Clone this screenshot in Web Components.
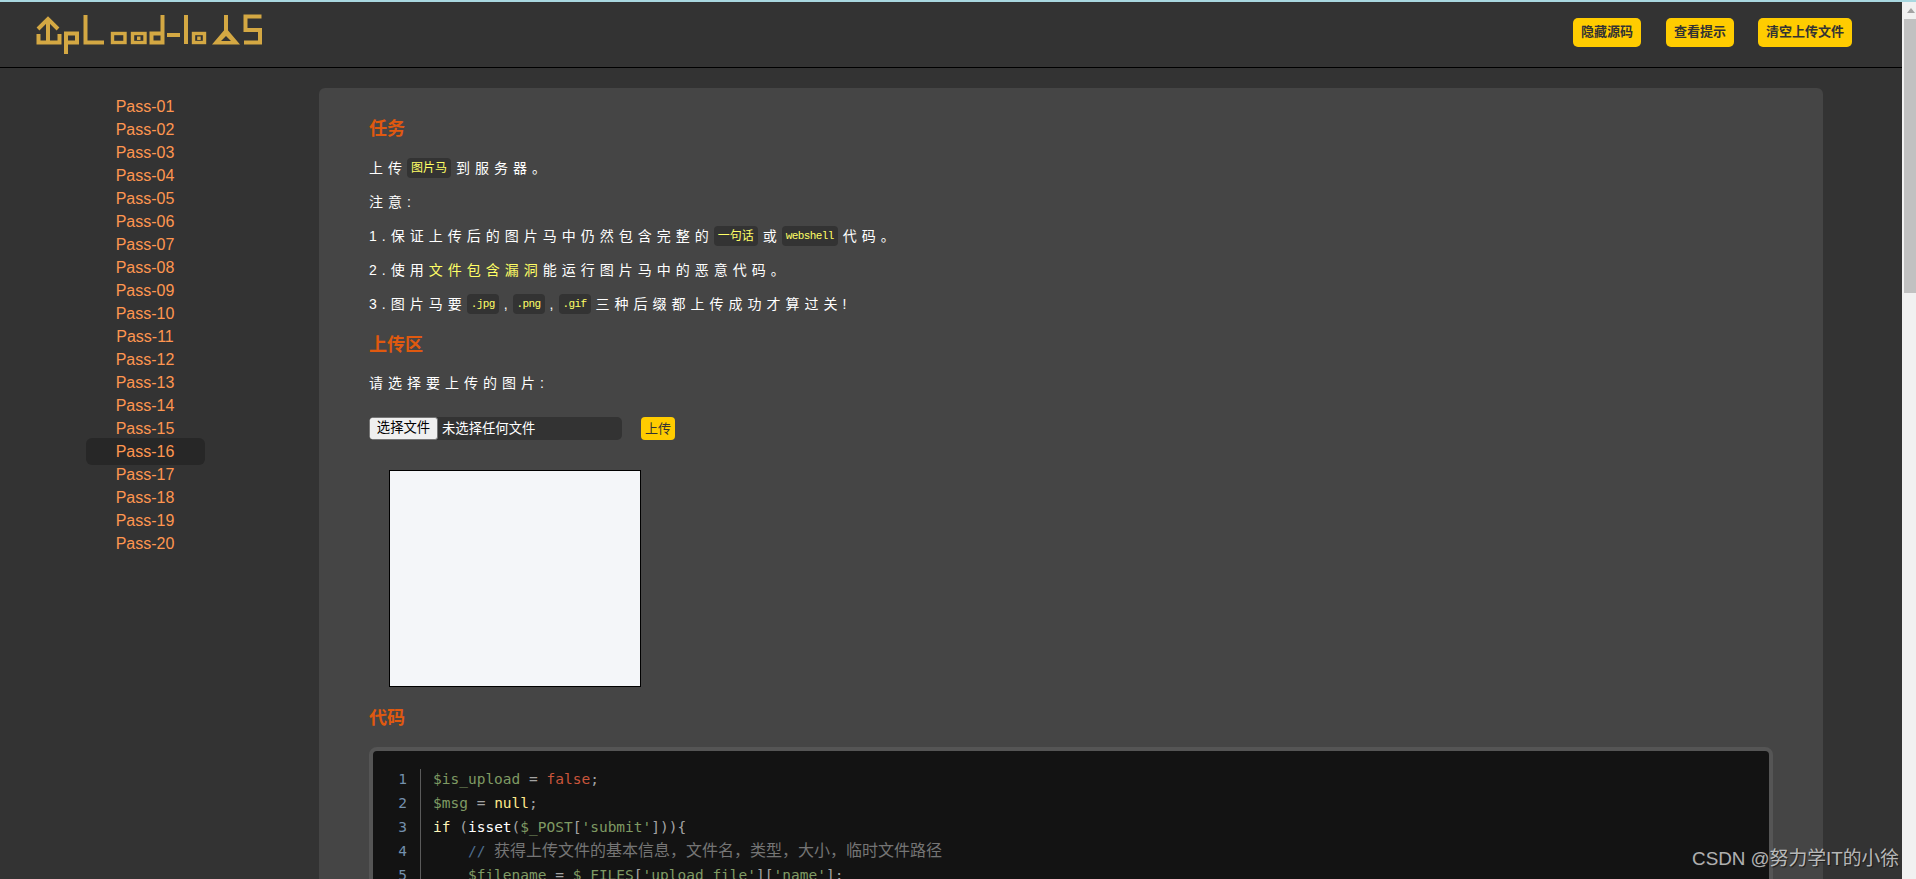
<!DOCTYPE html>
<html lang="zh-CN">
<head>
<meta charset="utf-8">
<title>upload-labs</title>
<style>
    html, body { margin: 0; height: 100%; overflow: hidden; background: #333; }
    body { font-family: "Liberation Sans", "Noto Sans CJK SC", sans-serif; }
</style>
</head>
<body>
<lab-page>
    <lab-header slot="header">
        <lab-button style="margin-right:1px">隐藏源码</lab-button>
        <lab-button>查看提示</lab-button>
        <lab-button>清空上传文件</lab-button>
    </lab-header>
    <lab-sidebar slot="sidebar">
        <lab-pass>Pass-01</lab-pass>
        <lab-pass>Pass-02</lab-pass>
        <lab-pass>Pass-03</lab-pass>
        <lab-pass>Pass-04</lab-pass>
        <lab-pass>Pass-05</lab-pass>
        <lab-pass>Pass-06</lab-pass>
        <lab-pass>Pass-07</lab-pass>
        <lab-pass>Pass-08</lab-pass>
        <lab-pass>Pass-09</lab-pass>
        <lab-pass>Pass-10</lab-pass>
        <lab-pass>Pass-11</lab-pass>
        <lab-pass>Pass-12</lab-pass>
        <lab-pass>Pass-13</lab-pass>
        <lab-pass>Pass-14</lab-pass>
        <lab-pass>Pass-15</lab-pass>
        <lab-pass active>Pass-16</lab-pass>
        <lab-pass>Pass-17</lab-pass>
        <lab-pass>Pass-18</lab-pass>
        <lab-pass>Pass-19</lab-pass>
        <lab-pass>Pass-20</lab-pass>
    </lab-sidebar>
    <lab-panel slot="main">
        <lab-heading style="margin-bottom:16px">任务</lab-heading>
        <lab-para>上传<lab-tag>图片马</lab-tag>到服务器。</lab-para>
        <lab-para>注意:</lab-para>
        <lab-para>1.保证上传后的图片马中仍然包含完整的<lab-tag>一句话</lab-tag>或<lab-tag latin>webshell</lab-tag>代码。</lab-para>
        <lab-para>2.使用<lab-mark>文件包含漏洞</lab-mark>能运行图片马中的恶意代码。</lab-para>
        <lab-para>3.图片马要<lab-tag latin>.jpg</lab-tag>,<lab-tag latin>.png</lab-tag>,<lab-tag latin>.gif</lab-tag>三种后缀都上传成功才算过关!</lab-para>
        <lab-heading style="margin-top:17.5px;margin-bottom:15px">上传区</lab-heading>
        <lab-para style="margin-bottom:24px">请选择要上传的图片:</lab-para>
        <lab-upload></lab-upload>
        <lab-preview></lab-preview>
        <lab-heading style="margin-bottom:16px">代码</lab-heading>
        <lab-code>
            <lab-line n="1"><span class="v">$is_upload</span><span class="o"> = </span><span class="k">false</span><span class="o">;</span></lab-line>
            <lab-line n="2"><span class="v">$msg</span><span class="o"> = </span><span class="n">null</span><span class="o">;</span></lab-line>
            <lab-line n="3"><span class="i">if</span><span class="o"> (</span><span class="f">isset</span><span class="o">(</span><span class="v">$_POST</span><span class="o">[</span><span class="v">'submit'</span><span class="o">])){</span></lab-line>
            <lab-line n="4"><span class="c">    // </span><span class="z">获得上传文件的基本信息&#xFF0C;文件名&#xFF0C;类型&#xFF0C;大小&#xFF0C;临时文件路径</span></lab-line>
            <lab-line n="5"><span class="v">    $filename</span><span class="o"> = </span><span class="v">$_FILES</span><span class="o">[</span><span class="v">'upload_file'</span><span class="o">][</span><span class="v">'name'</span><span class="o">];</span></lab-line>
        </lab-code>
    </lab-panel>
    <lab-scrollbar slot="scrollbar"></lab-scrollbar>
    <lab-watermark slot="overlay">CSDN @努力学IT的小徐</lab-watermark>
</lab-page>

<script>
    // every element is a shadow root with its own style, nothing shared
    function define(name, html) {
        const tmpl = document.createElement('template');
        tmpl.innerHTML = html;
        customElements.define(name, class extends HTMLElement {
            constructor() {
                super();
                this.attachShadow({ mode: 'open' }).appendChild(document.importNode(tmpl.content, true));
            }
        });
    }

    define('lab-page', /*html*/`
        <style>
            :host { display: grid; grid-template: auto 1fr / 1fr 14px; position: relative; height: 100vh; overflow: hidden;
                    background: #333; box-sizing: border-box; border-top: 2px solid #a9d8e0; }
            .head { grid-column: 1; grid-row: 1; min-width: 0; }
            .body { grid-column: 1; grid-row: 2; display: flex; min-height: 0; overflow: hidden; }
            .bar { grid-column: 2; grid-row: 1 / 3; margin-top: 0; }
        </style>
        <div class="head"><slot name="header"></slot></div>
        <div class="body"><slot name="sidebar"></slot><slot name="main"></slot></div>
        <div class="bar"><slot name="scrollbar"></slot></div>
        <slot name="overlay"></slot>`);

    define('lab-header', /*html*/`
        <style>
            :host { display: flex; align-items: center; justify-content: space-between; height: 65px;
                    border-bottom: 1px solid #000; padding: 0 50px 0 20px; }
            svg { display: block; margin-top: 1px; }
            .s { fill: none; stroke: #d4a843; stroke-width: 4; }
            .r { fill: none; stroke: #d4a843; stroke-width: 3.4; }
            .d { fill: #d4a843; }
            .btns { display: flex; gap: 24px; margin-top: -5px; }
        </style>
        <svg width="246" height="50" viewBox="0 5 246 50" role="img" aria-label="upload-labs logo">
            <path class="s" d="M18.500 29V37.500H39.500V29"/>
            <path class="s" d="M28 14V37"/>
            <path class="s" d="M18 24L28 14L38 24"/>
            <path class="s" d="M46 49V28.500H57V37.500H46"/>
            <path class="s" d="M65.500 10V37.500H84"/>
            <rect class="r" x="92.500" y="28.500" width="12.500" height="9"/>
            <rect class="r" x="112.500" y="28.500" width="12.500" height="9"/>
            <rect class="d" x="117" y="31.500" width="3.500" height="3.500"/>
            <path class="s" d="M142.500 10V37.500H131.500V28.500H142.500"/>
            <path class="s" d="M147 30H160"/>
            <path class="s" d="M166 10V39"/>
            <rect class="r" x="173.500" y="28.500" width="11" height="9"/>
            <rect class="d" x="177.200" y="31.500" width="3.500" height="3.500"/>
            <path class="s" d="M206 10V28"/>
            <path class="d" fill-rule="evenodd" d="M206 23L220 39.500H192ZM206 31L201 36H211Z"/>
            <path class="s" d="M241.500 11.500H225.500V25H240V37.500H224"/>
        </svg>
        <div class="btns"><slot></slot></div>`);

    define('lab-button', /*html*/`
        <style>
            :host { display: block; height: 29px; padding: 0 8px; background: #fc0; border-radius: 5px;
                    font: bold 13px/28px "Liberation Sans", "Noto Sans CJK SC", sans-serif; color: #333; box-sizing: border-box; }
        </style>
        <slot></slot>`);

    define('lab-sidebar', /*html*/`
        <style>
            :host { display: block; flex: 0 0 319px; box-sizing: border-box; padding: 26.500px 0 0 85.500px; }
        </style>
        <slot></slot>`);

    define('lab-pass', /*html*/`
        <style>
            :host { display: block; width: 119px; height: 23px; font: 16px/23px "Liberation Sans", sans-serif;
                    color: #ff9650; text-align: center; }
            :host([active]) { height: 27px; line-height: 27px; margin: -2px 0; background: #272727; border-radius: 6px; position: relative; }
        </style>
        <slot></slot>`);

    define('lab-panel', /*html*/`
        <style>
            :host { display: block; flex: 0 0 1504px; box-sizing: border-box; margin-top: 20px; padding: 28px 50px 0;
                    background: #454545; border-radius: 6px 6px 0 0; color: #fff;
                    font-family: "Liberation Sans", "Noto Sans CJK SC", sans-serif; }
        </style>
        <slot></slot>`);

    define('lab-heading', /*html*/`
        <style>
            :host { display: block; font: bold 18px/26px "Liberation Sans", "Noto Sans CJK SC", sans-serif; color: #e0590f; margin: 0 0 17px; }
        </style>
        <slot></slot>`);

    define('lab-para', /*html*/`
        <style>
            :host { display: block; font-size: 14px; line-height: 20px; letter-spacing: 5px; margin: 0 0 14px; color: #fff; white-space: nowrap; }
        </style>
        <slot></slot>`);

    define('lab-tag', /*html*/`
        <style>
            :host { display: inline-block; height: 20px; line-height: 20px; padding: 0 4px; margin-right: 5px; vertical-align: top;
                    background: #333; border-radius: 4px; color: #ff6; letter-spacing: 0; font-size: 12px; }
            :host([latin]) { font-family: "Liberation Mono", monospace; font-size: 11px; letter-spacing: -.6px; }
        </style>
        <slot></slot>`);

    // no whitespace before the slot, the host is inline and would show it
    define('lab-mark', `<style>:host { color: #ff6; }</style><slot></slot>`);

    define('lab-upload', /*html*/`
        <style>
            :host { display: flex; align-items: flex-start; height: 24px; font: 13.333px/23px "Liberation Sans", "Noto Sans CJK SC", sans-serif; }
            .file { display: flex; width: 253px; height: 23px; background: #333; border-radius: 5px; color: #fff; overflow: hidden; }
            .pick { width: 69px; box-sizing: border-box; height: 23px; line-height: 20px; background: #efefef; color: #000; text-align: center;
                    border: 1px solid #767676; border-radius: 3px; margin-right: 4px; }
            .go { margin: 0 0 0 19px; width: 34px; height: 23px; box-sizing: border-box; background: #fc0; border-radius: 4px;
                  color: #333; font-size: 13px; text-align: center; }
        </style>
        <div class="file"><div class="pick">选择文件</div><div>未选择任何文件</div></div>
        <div class="go">上传</div>`);

    define('lab-preview', /*html*/`
        <style>
            :host { display: block; width: 252px; height: 217px; box-sizing: border-box; margin: 29px 0 18px 20px;
                    background: #f4f6f9; border: 1px solid #000; }
        </style>`);

    define('lab-code', /*html*/`
        <style>
            :host { display: block; box-sizing: border-box; width: 1404px; height: 400px; padding-top: 18px;
                    background: #131313; border: 4px solid #555; border-radius: 8px; }
        </style>
        <slot></slot>`);

    define('lab-line', /*html*/`
        <style>
            :host { display: flex; height: 24px; font: 14.500px/20px "DejaVu Sans Mono", monospace; white-space: pre; }
            .n { width: 48px; box-sizing: border-box; padding-right: 13px; text-align: right; border-right: 1px solid #5a5a5a; color: #7490ad; }
            .t { padding-left: 12px; }
            ::slotted(.v) { color: #7f9a63; }
            ::slotted(.o) { color: #a3a3a3; }
            ::slotted(.k) { color: #c9553b; }
            ::slotted(.n) { color: #ffe98a; }
            ::slotted(.i) { color: #fff6b8; }
            ::slotted(.f) { color: #fff; }
            ::slotted(.c) { color: #4f6f90; }
            ::slotted(.z) { color: #757575; font-size: 16px; line-height: 1; font-family: "Noto Sans CJK SC", sans-serif; }
        </style>
        <div class="n"></div><div class="t"><slot></slot></div>`);

    // line number comes from the n attribute
    customElements.whenDefined('lab-line').then(() => {
        document.querySelectorAll('lab-line').forEach(l => {
            l.shadowRoot.querySelector('.n').textContent = l.getAttribute('n');
        });
    });

    define('lab-scrollbar', /*html*/`
        <style>
            :host { display: block; height: 100%; background: #f1f1f1; position: relative; }
            .arrow { height: 17px; display: flex; align-items: center; justify-content: center; padding-left: 3px; box-sizing: border-box; }
            .thumb { margin-left: 2px; height: 274px; background: #c1c1c1; }
        </style>
        <div class="arrow"><svg width="8" height="5" viewBox="0 0 8 5"><path d="M4 0L8 5H0Z" fill="#a3a3a3"/></svg></div>
        <div class="thumb"></div>`);

    define('lab-watermark', /*html*/`
        <style>
            :host { position: absolute; right: 17px; bottom: 8px; font: 18.800px/24px "Liberation Sans", "Noto Sans CJK SC", sans-serif;
                    color: rgba(255,255,255,.68); text-shadow: 1px 1px 1px #1c1c1c; white-space: nowrap; }
        </style>
        <slot></slot>`);
</script>
</body>
</html>
